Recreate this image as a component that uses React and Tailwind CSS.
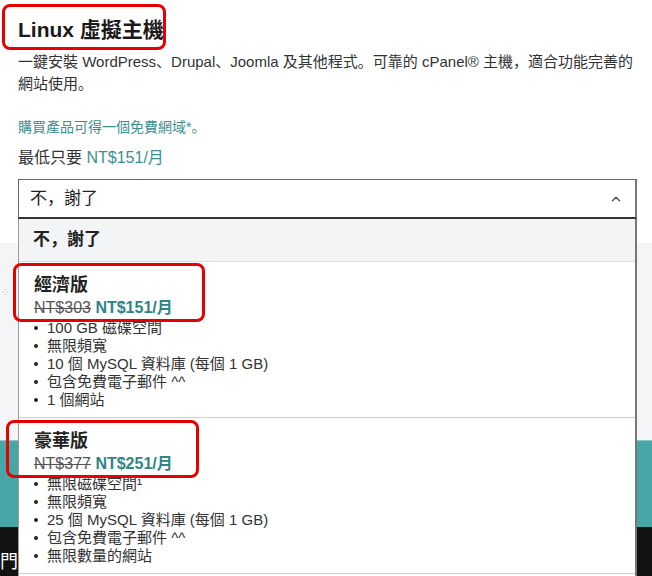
import { ChevronUp } from "lucide-react";

const font = "font-['Liberation_Sans','Noto_Sans_CJK_SC',sans-serif]";

const plans = [
  {
    name: "經濟版",
    old: "NT$303",
    price: "NT$151/月",
    items: ["100 GB 磁碟空間", "無限頻寬", "10 個 MySQL 資料庫 (每個 1 GB)", "包含免費電子郵件 ^^", "1 個網站"],
  },
  {
    name: "豪華版",
    old: "NT$377",
    price: "NT$251/月",
    items: ["無限磁碟空間¹", "無限頻寬", "25 個 MySQL 資料庫 (每個 1 GB)", "包含免費電子郵件 ^^", "無限數量的網站"],
  },
];

function PlanOption({ plan }) {
  return (
    <div className="border-b border-[#d0d0d0] bg-white pl-[15px] pt-[11px] pb-[8px]">
      <div className="text-[18px] leading-[24px] font-bold text-[#222]">{plan.name}</div>
      <div className="text-[16px] leading-[22px]">
        <span className="text-[#555] line-through">{plan.old}</span>{" "}
        <span className="font-bold text-[#2e8585]">{plan.price}</span>
      </div>
      <ul>
        {plan.items.map((it) => (
          <li key={it} className="flex items-center text-[15px] leading-[18px] text-[#333]">
            <span className="w-[4px] h-[4px] rounded-full bg-[#222] mr-[9px]" />
            {it}
          </li>
        ))}
      </ul>
    </div>
  );
}

export default function App() {
  return (
    <div className={`relative w-[652px] h-[576px] overflow-hidden bg-white ${font}`}>
      {/* page background bands */}
      <div className="flex flex-col h-full">
        <div className="h-[243px] bg-white" />
        <div className="h-[197px] bg-[#f4f5f7] relative">
          <span className="absolute left-[2px] top-[44px] text-[8px] text-[#999]">⁘</span>
        </div>
        <div className="h-[87px] bg-[#48a6a6] border-t border-[#8cc8c8]" />
        <div className="flex-1 bg-[#121212] text-white text-[18px] leading-none pt-[26px] pl-0">門</div>
      </div>

      {/* content */}
      <div className="absolute inset-x-0 top-0 px-[18px] pt-[16px]">
        <h2 className="text-[21px] leading-[28px] font-bold text-[#1a1a1a]">Linux 虛擬主機</h2>
        <p className="mt-[7px] text-[15px] leading-[22px] text-[#333] w-[619px]">
          一鍵安裝 WordPress、Drupal、Joomla 及其他程式。可靠的 cPanel® 主機，適合功能完善的
          <br />
          網站使用。
        </p>
        <p className="mt-[22px] text-[14px] leading-[20px] text-[#3b8f8f]">購買產品可得一個免費網域*。</p>
        <p className="mt-[10px] text-[16px] leading-[22px] text-[#333]">
          最低只要 <span className="text-[#3b8f8f]">NT$151/月</span>
        </p>

        <div className="relative mt-[10px] w-[619px]">
          <div className="h-[40px] border border-[#666] border-b-2 border-b-[#333] border-r-2 border-r-[#777] bg-white flex items-center justify-between pl-[11px] pr-[12px]">
            <span className="text-[17px] text-[#222]">不，謝了</span>
            <ChevronUp size={14} strokeWidth={2.5} className="text-[#555]" />
          </div>
          <div className="absolute left-0 top-full w-full h-[400px] bg-white border-l border-[#9a9a9a] border-r-2 border-r-[#777]">
            <div className="h-[43px] bg-[#f3f4f6] border-b border-[#dcdcdc] flex items-center pl-[14px] text-[17px] font-bold text-[#222]">
              不，謝了
            </div>
            {plans.map((p) => (
              <PlanOption key={p.name} plan={p} />
            ))}
          </div>
        </div>
      </div>

      {/* red highlight annotations */}
      <div className="absolute left-[2px] top-[4px] w-[164px] h-[46px] border-[3px] border-[#e60000] rounded-[8px]" />
      <div className="absolute left-[13px] top-[263px] w-[192px] h-[59px] border-[3px] border-[#e60000] rounded-[8px]" />
      <div className="absolute left-[6px] top-[420px] w-[193px] h-[58px] border-[3px] border-[#e60000] rounded-[8px]" />
    </div>
  );
}
